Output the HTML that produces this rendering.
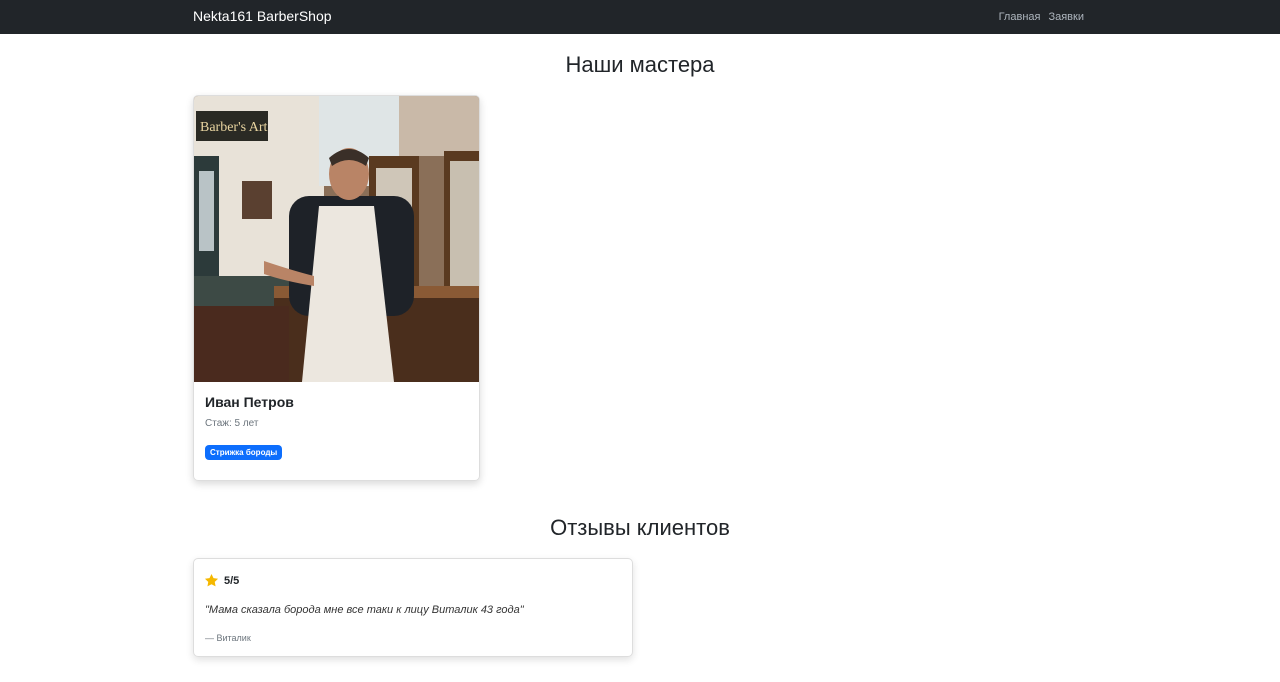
<!DOCTYPE html>
<html><head><meta charset="utf-8"><style>
*{box-sizing:border-box;margin:0;padding:0}
body{width:1280px;height:682px;overflow:hidden;background:#fff;font-family:"Liberation Sans","DejaVu Sans",sans-serif;color:#212529}
.nav{height:34px;background:#212529;position:relative}
.brand{position:absolute;left:193px;top:8px;color:#fff;font-size:14px}
.links{position:absolute;right:196px;top:11px;font-size:11px;color:#adb5bd}
.links span{margin-left:8px}
h2{font-size:22px;font-weight:500;text-align:center;position:absolute;left:0;width:1280px}
.card{position:absolute;left:193px;top:95px;width:287px;height:386px;border:1px solid #ddd;border-radius:5px;box-shadow:0 3px 8px rgba(0,0,0,.15);overflow:hidden}
.name{position:absolute;left:11px;top:298px;font-size:14px;font-weight:bold}
.exp{position:absolute;left:11px;top:322px;font-size:10px;color:#6c757d}
.badge{position:absolute;left:11px;top:349px;background:#0d6efd;color:#fff;font-size:8px;font-weight:bold;padding:3px 5px;border-radius:4px}
.rev{position:absolute;left:193px;top:558px;width:440px;height:99px;border:1px solid #ddd;border-radius:5px;box-shadow:0 3px 8px rgba(0,0,0,.12)}
</style></head><body>
<div class="nav"><div class="brand">Nekta161 BarberShop</div><div class="links"><span>Главная</span><span>Заявки</span></div></div>
<h2 style="top:52px">Наши мастера</h2>
<div class="card">
<svg width="287" height="286" viewBox="0 0 287 286" style="display:block">
<rect width="287" height="286" fill="#8a6f58"/>
<rect x="0" y="0" width="130" height="200" fill="#e8e2d8"/>
<rect x="0" y="60" width="25" height="140" fill="#2c3a3a"/>
<rect x="5" y="75" width="15" height="80" fill="#b9c3c6"/>
<rect x="0" y="180" width="120" height="106" fill="#3d4a45"/>
<rect x="125" y="0" width="80" height="90" fill="#dfe5e6"/>
<rect x="205" y="0" width="82" height="60" fill="#c9b9a8"/>
<rect x="2" y="15" width="72" height="30" fill="#2a2a24"/>
<text x="6" y="35" font-size="14" fill="#e8d4a0" font-family="Liberation Serif">Barber's Art</text>
<rect x="48" y="85" width="30" height="38" fill="#5a4030"/>
<rect x="175" y="60" width="50" height="160" fill="#5a3a20"/><rect x="182" y="72" width="36" height="140" fill="#cfc6b8"/>
<rect x="250" y="55" width="37" height="150" fill="#5a3a20"/><rect x="256" y="65" width="31" height="130" fill="#c8bfb0"/>
<rect x="80" y="190" width="207" height="96" fill="#4a2e1c"/>
<rect x="80" y="190" width="207" height="12" fill="#8a5a35"/>
<rect x="0" y="210" width="95" height="76" fill="#4a2a1e"/>
<rect x="95" y="100" width="125" height="120" fill="#1e2228" rx="20"/>
<path d="M125 110 L180 110 L200 286 L108 286 Z" fill="#ece7df"/>
<ellipse cx="155" cy="78" rx="20" ry="26" fill="#b98466"/>
<path d="M135 62 Q155 44 175 62 L172 70 Q155 58 138 70 Z" fill="#3a2f28"/>
<path d="M70 165 Q100 175 120 180 L120 190 Q90 185 70 178 Z" fill="#b98466"/>
</svg>
<div class="name">Иван Петров</div>
<div class="exp">Стаж: 5 лет</div>
<div class="badge">Стрижка бороды</div>
</div>
<h2 style="top:515px">Отзывы клиентов</h2>
<div class="rev">
<svg style="position:absolute;left:10px;top:14px" width="15" height="15" viewBox="0 0 24 24"><path d="M12 1.5l3.2 6.6 7.3 1-5.3 5.1 1.3 7.2L12 18l-6.5 3.4 1.3-7.2L1.5 9.1l7.3-1z" fill="#f5b800"/></svg>
<div style="position:absolute;left:30px;top:16px;font-size:11px;font-weight:bold">5/5</div>
<div style="position:absolute;left:11px;top:45px;font-size:11px;font-style:italic;color:#333">"Мама сказала борода мне все таки к лицу Виталик 43 года"</div>
<div style="position:absolute;left:11px;top:74px;font-size:9px;color:#6c757d">— Виталик</div>
</div>
</body></html>
